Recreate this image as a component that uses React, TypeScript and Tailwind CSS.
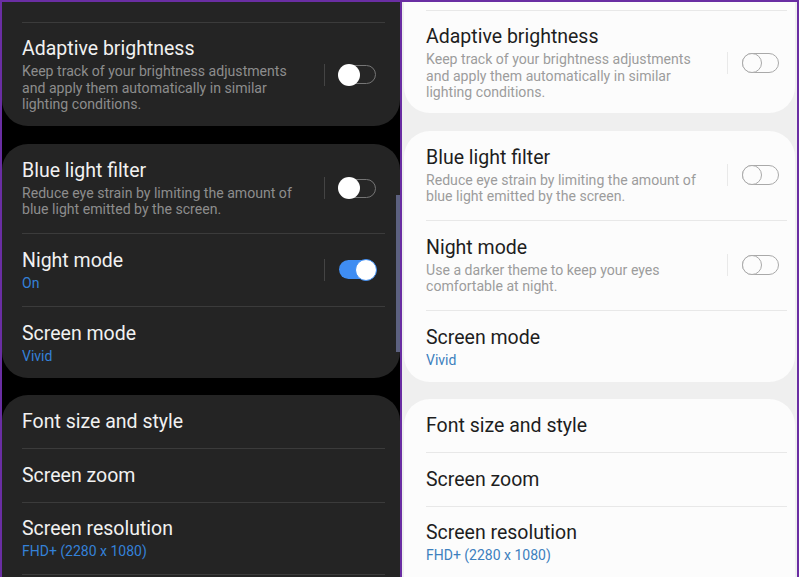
import React from "react";

type Theme = "dark" | "light";

function Toggle({ theme, on }: { theme: Theme; on?: boolean }) {
  if (theme === "light") {
    return (
      <div className="relative w-[37px] h-[20px] mr-[8px]">
        <div className="absolute inset-0 rounded-full border-[1.5px] border-[#a9a9a9] bg-[#fcfcfc]" />
        <div className="absolute left-0 top-0 w-[20px] h-[20px] rounded-full border-[1.5px] border-[#a9a9a9] bg-[#fcfcfc]" />
      </div>
    );
  }
  if (on) {
    return (
      <div className="relative w-[37px] h-[21px] mr-[9px]">
        <div className="absolute left-0 right-0 top-[1px] bottom-[1px] rounded-full bg-[#3f8df2]" />
        <div className="absolute right-[-1px] top-[-0.5px] w-[22px] h-[22px] rounded-full bg-white border-[1.5px] border-[#3f8df2]" />
      </div>
    );
  }
  return (
    <div className="relative w-[37px] h-[21px] mr-[9px]">
      <div className="absolute left-0 right-0 top-[1px] bottom-[1px] rounded-full border-[1.5px] border-[#767676] bg-[#262626]" />
      <div className="absolute left-[-1px] top-[-0.5px] w-[22px] h-[22px] rounded-full bg-white" />
    </div>
  );
}

function Item({
  theme,
  title,
  desc,
  sub,
  toggle,
  on,
  first,
  pt = "pt-[15px]",
  pb = "pb-[15px]",
}: {
  theme: Theme;
  title: string;
  desc?: string[];
  sub?: string;
  toggle?: boolean;
  on?: boolean;
  first?: boolean;
  pt?: string;
  pb?: string;
}) {
  const dark = theme === "dark";
  return (
    <div
      className={`flex items-center ${pt} ${pb} ${
        first ? "" : dark ? "border-t border-[#3b3b3b]" : "border-t border-[#e8e8e8]"
      }`}
    >
      <div className="flex-1">
        <div className={`text-[19.5px] leading-[24px] ${dark ? "text-[#f1f1f1]" : "text-[#1e1e1e]"}`}>{title}</div>
        {desc && (
          <div className={`mt-[2px] text-[14.1px] leading-[16.5px] ${dark ? "text-[#8d8d8d]" : "text-[#9c9c9c]"}`}>
            {desc.map((l, i) => (
              <div key={i}>{l}</div>
            ))}
          </div>
        )}
        {sub && (
          <div className={`mt-[2px] text-[14px] leading-[16px] ${dark ? "text-[#3481d8]" : "text-[#3d80be]"}`}>{sub}</div>
        )}
      </div>
      {toggle && (
        <div className="flex items-center">
          <div className={`w-px h-[22px] mr-[14px] ${dark ? "bg-[#444444]" : "bg-[#e9e9e9]"}`} />
          <Toggle theme={theme} on={on} />
        </div>
      )}
    </div>
  );
}

function Panel({ theme }: { theme: Theme }) {
  const dark = theme === "dark";
  const card = dark ? "bg-[#242424] pl-[20px] pr-[15px]" : "bg-[#fcfcfc] pl-[22px] pr-[8px]";
  return (
    <div className={`relative flex flex-col h-full overflow-hidden ${dark ? "bg-black w-[398px]" : "bg-[#efefef] flex-1 px-[2px]"}`}>
      <div className={`${card} rounded-b-[26px] ${dark ? "pt-[20px]" : "pt-[8px]"}`}>
        <Item
          theme={theme}
          title="Adaptive brightness"
          desc={[
            "Keep track of your brightness adjustments",
            "and apply them automatically in similar",
            "lighting conditions.",
          ]}
          toggle
          pt="pt-[14px]"
          pb={dark ? "pb-[13px]" : "pb-[12px]"}
        />
      </div>
      <div className={`${card} rounded-[26px] mt-[18px]`}>
        <Item
          theme={theme}
          first
          title="Blue light filter"
          desc={["Reduce eye strain by limiting the amount of", "blue light emitted by the screen."]}
          toggle
        />
        {dark ? (
          <Item theme={theme} title="Night mode" sub="On" toggle on />
        ) : (
          <Item
            theme={theme}
            title="Night mode"
            desc={["Use a darker theme to keep your eyes", "comfortable at night."]}
            toggle
          />
        )}
        <Item theme={theme} title="Screen mode" sub="Vivid" pb="pb-[14px]" />
      </div>
      <div className={`${card} rounded-t-[26px] mt-[17px] flex-1`}>
        <Item theme={theme} first title="Font size and style" pb="pb-[14px]" />
        <Item theme={theme} title="Screen zoom" pb="pb-[14px]" />
        <Item theme={theme} title="Screen resolution" sub="FHD+ (2280 x 1080)" pt="pt-[14px]" />
        <div className={`h-px ${dark ? "bg-[#3b3b3b]" : "bg-[#e8e8e8]"}`} />
      </div>
      {dark && <div className="absolute right-0 top-[193px] w-[4px] h-[157px] bg-[#5c6180]" />}
    </div>
  );
}

export default function App() {
  return (
    <div
      className="w-[799px] h-[577px] overflow-hidden bg-[#6a2ea3] flex gap-[2px] pt-[2px] px-[2px]"
      style={{ fontFamily: "Roboto, 'Noto Sans', sans-serif" }}
    >
      <Panel theme="dark" />
      <Panel theme="light" />
    </div>
  );
}
